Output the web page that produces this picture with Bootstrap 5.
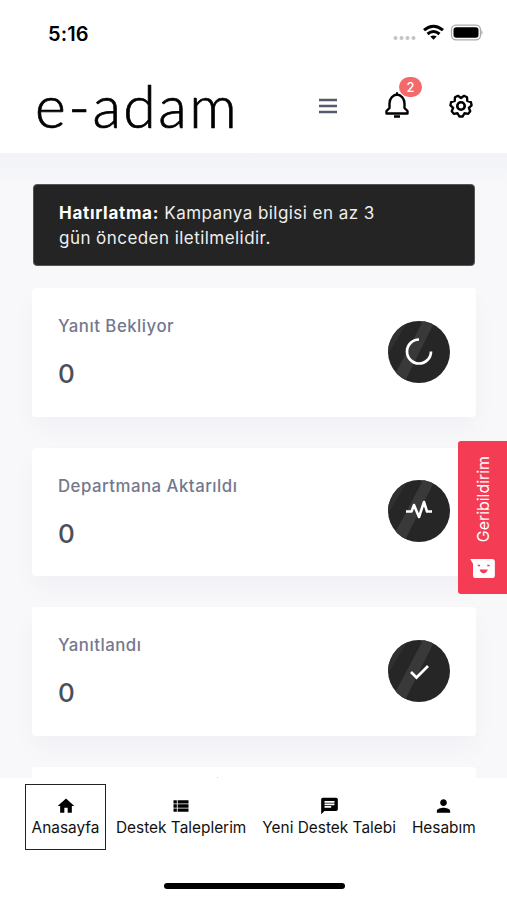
<!DOCTYPE html>
<html lang="tr">
<head>
<meta charset="utf-8">
<meta name="viewport" content="width=device-width, initial-scale=1">
<title>e-adam</title>
<link rel="stylesheet" href="https://cdn.jsdelivr.net/npm/bootstrap@5.3.0/dist/css/bootstrap.min.css">
<style>
body{font-family:Inter,"Liberation Sans",sans-serif;color:#111;background:#f8f8fb}
.screen{height:900px;overflow:hidden}
svg{display:block;flex:none}
.top-area{height:153px;background:#fff}
.status-row{height:66px;padding:0 24px 0 48px}
.clock{font-size:20px;font-weight:600;letter-spacing:.1px;padding-top:1px;color:#000}
.brand-row{height:80px;padding:0 32px 0 35px}
.wordmark{font-family:Lato,sans-serif;font-weight:300;font-size:59px;line-height:80px;letter-spacing:2.4px;color:#000;-webkit-text-stroke:.7px #000}
.menu-icon{margin-right:46px}
.bell{margin-right:36px}
.count-badge{position:absolute;left:16px;top:-15px;width:23px;height:20px;background:#f46a6a;font-size:13px;font-weight:500;line-height:20px;padding:0}
.content-area{height:625px;padding:31px 31px 0 32px;background:linear-gradient(#f2f3f7,#f8f8fb 32px)}
.reminder{height:82px;margin:0 1px 22px;padding:16px 60px 0 25px;background:#242424;border:1px solid #555;border-radius:4px;color:#eee;font-size:17px;line-height:25px;letter-spacing:.45px}
.reminder b{color:#fff;letter-spacing:.7px}
.stat{height:128.500px;margin-bottom:31px;border:0;border-radius:4px;padding:0 26px;box-shadow:0 12px 24px rgba(18,38,63,.03)}
.stat-name{font-size:16.800px;line-height:24px;letter-spacing:.5px;font-weight:500;color:#74788d;margin:0 0 20px}
.stat-value{font-size:26px;line-height:32px;font-weight:500;color:#495057}
.stat .disc{margin-top:-1px}
.tabs{height:122px;background:#fff;padding:6px 25px 0}
.tab{height:66px;border:1px solid transparent;color:#111;font-size:15.400px;line-height:20px;padding-top:11px;white-space:nowrap;text-decoration:none}
.tab span{margin-top:2px}
.tab.current{width:81px;margin-right:9px;border-color:#222}
.tab-gap{margin-left:14px}
.home-bar{width:181px;height:6px;border-radius:3px;background:#000;left:164px;bottom:11px}
.feedback{right:0;top:441px;width:49px;height:153px;background:#f43c54;border-radius:3px 0 0 3px;color:#fff;padding:15px 0 16px}
.feedback span{writing-mode:vertical-rl;transform:rotate(180deg);font-size:15.900px;line-height:20px;margin-left:3px}
</style>
<script src="https://cdn.jsdelivr.net/npm/bootstrap@5.3.0/dist/js/bootstrap.bundle.min.js"></script>
</head>
<body>
<svg width="0" height="0" class="position-absolute">
  <defs><clipPath id="disc"><circle cx="31" cy="31" r="31"/></clipPath>
  <g id="glossy"><circle cx="31" cy="31" r="31" fill="#262626"/><path clip-path="url(#disc)" d="M-6 34L14 0H20L-6 44z" fill="#303030"/><path clip-path="url(#disc)" d="M7 53L35 0H47L17 60z" fill="#393939"/></g></defs>
</svg>
<div class="screen position-relative d-flex flex-column">
  <header class="top-area flex-shrink-0">
    <div class="status-row d-flex align-items-center justify-content-between">
      <span class="clock">5:16</span>
      <svg width="91" height="18" viewBox="0 0 91 18">
        <g fill="#c4c4c6"><circle cx="3.500" cy="14" r="2"/><circle cx="9.500" cy="14" r="2"/><circle cx="15.500" cy="14" r="2"/><circle cx="21.500" cy="14" r="2"/></g>
        <g fill="none" stroke="#000" stroke-width="3"><path d="M32 6.200Q41.500-1.800 51 6.200"/><path d="M35.500 10Q41.500 5 47.500 10"/></g>
        <path d="M38.300 12.500Q41.500 10.500 44.700 12.500L41.500 15.700z"/>
        <rect x="59.500" y="1.200" width="29" height="14.600" rx="4.500" fill="#fff" stroke="#aaa" stroke-width="1.300"/><rect x="61.500" y="3.200" width="25" height="10.600" rx="2.700"/><path d="M89.500 6q2 2.500 0 5z" fill="#999"/>
      </svg>
    </div>
    <div class="brand-row d-flex align-items-center">
      <span class="wordmark me-auto">e-adam</span>
      <svg class="menu-icon" width="18" height="16" viewBox="0 0 18 16" stroke="#555b6d" stroke-width="2.600"><path d="M0 2H18M0 8H18M0 14H18"/></svg>
      <div class="bell position-relative">
        <svg width="28" height="28" viewBox="0 0 28 28" fill="none" stroke="#000" stroke-width="2.400" stroke-linejoin="round"><path d="M6.500 11.500C6.500 6.500 10 3 14 2.500C18 3 21.500 6.500 21.500 11.500V16L24.500 19V21.500H3.500V19L6.500 16z"/><path d="M13 1.500H15M11 24.600H17" stroke-width="2.500"/></svg>
        <span class="badge rounded-pill count-badge">2</span>
      </div>
      <svg width="28" height="28" viewBox="-1 -1 30 30" fill="none" stroke="#000" stroke-width="2.500" stroke-linejoin="round"><path d="M15.780 25.260L12.220 25.260L10.270 21.750L6.310 22.420L4.090 19.630L5.620 15.920L2.630 13.220L3.420 9.750L7.280 8.630L7.510 4.630L10.720 3.080L14 5.400L17.280 3.080L20.490 4.630L20.720 8.630L24.580 9.750L25.370 13.220L22.380 15.920L23.910 19.630L21.690 22.420L17.730 21.750z"/><circle cx="14" cy="14" r="4" stroke-width="2.800"/></svg>
    </div>
  </header>

  <main class="content-area flex-shrink-0 overflow-hidden">
    <div class="reminder"><div class="text-nowrap"><b>Hatırlatma:</b> Kampanya bilgisi en az 3</div><div class="text-nowrap">gün önceden iletilmelidir.</div></div>
    <section class="card stat flex-row align-items-center justify-content-between">
      <div><div class="stat-name">Yanıt Bekliyor</div><div class="stat-value">0</div></div>
      <svg class="disc" width="62" height="62"><use href="#glossy"/><path d="M31 18.500A12 12 0 1 0 43 30.500" fill="none" stroke="#fff" stroke-width="2.700"/></svg>
    </section>
    <section class="card stat flex-row align-items-center justify-content-between">
      <div><div class="stat-name">Departmana Aktarıldı</div><div class="stat-value">0</div></div>
      <svg class="disc" width="62" height="62"><use href="#glossy"/><path d="M18 31.500H23.500L26 25L31 37L36 22L39 31.500H44" fill="none" stroke="#fff" stroke-width="2.600" stroke-linejoin="round"/></svg>
    </section>
    <section class="card stat flex-row align-items-center justify-content-between">
      <div><div class="stat-name">Yanıtlandı</div><div class="stat-value">0</div></div>
      <svg class="disc" width="62" height="62"><use href="#glossy"/><path d="M23 32L28.500 37.500L40 26" fill="none" stroke="#fff" stroke-width="2.700"/></svg>
    </section>
    <section class="card stat"><svg class="ms-auto me-auto" width="74" height="12"><circle cx="0" cy="12" r="1.500" fill="#74788d"/></svg></section>
  </main>

  <nav class="tabs flex-shrink-0 d-flex align-items-start">
    <a class="tab current flex-shrink-0 d-flex flex-column align-items-center" href="#"><svg width="20" height="20" viewBox="0 0 24 24"><path d="M10 20v-6h4v6h5v-8h3L12 3 2 12h3v8z"/></svg><span>Anasayfa</span></a>
    <a class="tab d-flex flex-column align-items-center" href="#"><svg width="20" height="20" viewBox="0 0 24 24"><path d="M3 14h4v-4H3zM3 19h4v-4H3zM3 9h4V5H3zM8 14h13v-4H8zM8 19h13v-4H8zM8 5v4h13V5z"/></svg><span>Destek Taleplerim</span></a>
    <a class="tab tab-gap d-flex flex-column align-items-center" href="#"><svg width="21" height="20" viewBox="0 0 24 24"><path fill-rule="evenodd" d="M20 2H4c-1.100 0-2 .9-2 2v18l4-4h14c1.100 0 2-.9 2-2V4c0-1.100-.9-2-2-2zM6 9h12v2H6zm8 5H6v-2h8zm4-6H6V6h12z"/></svg><span>Yeni Destek Talebi</span></a>
    <a class="tab tab-gap d-flex flex-column align-items-center" href="#"><svg width="21" height="20" viewBox="0 0 24 24"><path d="M12 12c2.200 0 4-1.800 4-4s-1.800-4-4-4-4 1.800-4 4 1.800 4 4 4zm0 2c-2.700 0-8 1.300-8 4v2h16v-2c0-2.700-5.300-4-8-4z"/></svg><span>Hesabım</span></a>
  </nav>
  <div class="home-bar position-absolute"></div>
  <aside class="feedback position-absolute d-flex flex-column align-items-center justify-content-between">
    <span>Geribildirim</span>
    <svg width="25" height="19" viewBox="0 0 26 20"><path fill="#fff" d="M0 0H23Q26 0 26 3V17Q26 20 23 20H6Q3 20 3 17V5z"/><path fill="#f43c54" d="M8 6h2.500v1.500H8zM18 6h2.500v1.500H18zM10 11h8.500Q17.500 15 14.200 15T10 11z"/></svg>
  </aside>
</div>
</body>
</html>
